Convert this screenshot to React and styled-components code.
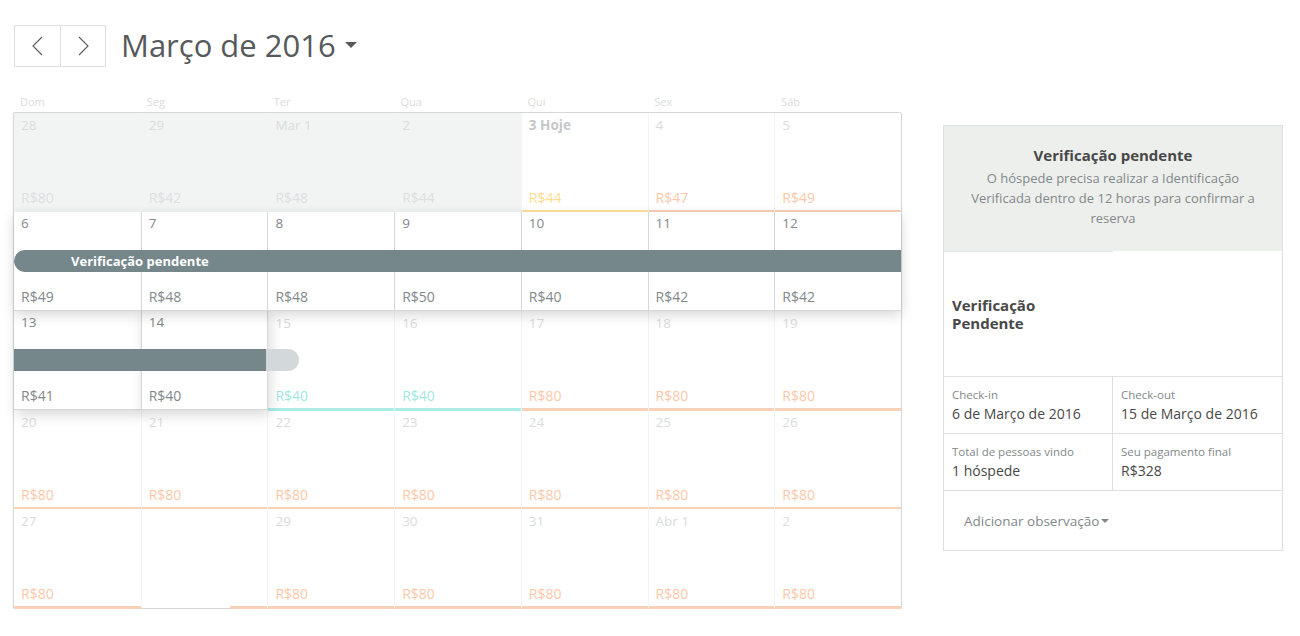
import React from "react";
import styled, { createGlobalStyle, css } from "styled-components";

const GlobalStyle = createGlobalStyle`
  body {
    margin: 0;
    background: #fff;
    font-family: "Open Sans", "Liberation Sans", sans-serif;
    color: #565a5c;
  }
`;

const weekdays = ["Dom", "Seg", "Ter", "Qua", "Qui", "Sex", "Sáb"];

const weeks = [
  {
    days: [
      { d: "28", p: "R$80", t: "past" },
      { d: "29", p: "R$42", t: "past" },
      { d: "Mar 1", p: "R$48", t: "past" },
      { d: "2", p: "R$44", t: "past" },
      { d: "3 Hoje", p: "R$44", t: "today" },
      { d: "4", p: "R$47", t: "open" },
      { d: "5", p: "R$49", t: "open" },
    ],
  },
  {
    raised: true,
    bar: { label: "Verificação pendente", dark: 887, tail: 0, open: true },
    days: [
      { d: "6", p: "R$49", t: "booked" },
      { d: "7", p: "R$48", t: "booked" },
      { d: "8", p: "R$48", t: "booked" },
      { d: "9", p: "R$50", t: "booked" },
      { d: "10", p: "R$40", t: "booked" },
      { d: "11", p: "R$42", t: "booked" },
      { d: "12", p: "R$42", t: "booked" },
    ],
  },
  {
    bar: { label: "", dark: 252, tail: 33 },
    days: [
      { d: "13", p: "R$41", t: "booked", lift: true },
      { d: "14", p: "R$40", t: "booked", lift: true },
      { d: "15", p: "R$40", t: "cyan" },
      { d: "16", p: "R$40", t: "cyan" },
      { d: "17", p: "R$80", t: "open" },
      { d: "18", p: "R$80", t: "open" },
      { d: "19", p: "R$80", t: "open" },
    ],
  },
  {
    days: [
      { d: "20", p: "R$80", t: "open" },
      { d: "21", p: "R$80", t: "open" },
      { d: "22", p: "R$80", t: "open" },
      { d: "23", p: "R$80", t: "open" },
      { d: "24", p: "R$80", t: "open" },
      { d: "25", p: "R$80", t: "open" },
      { d: "26", p: "R$80", t: "open" },
    ],
  },
  {
    days: [
      { d: "27", p: "R$80", t: "open" },
      { d: "", p: "", t: "blank" },
      { d: "29", p: "R$80", t: "open" },
      { d: "30", p: "R$80", t: "open" },
      { d: "31", p: "R$80", t: "open" },
      { d: "Abr 1", p: "R$80", t: "open" },
      { d: "2", p: "R$80", t: "open" },
    ],
  },
];

const palette = {
  past: { date: "#d9dcdd", price: "#dcdfe0", line: null, bg: "#f2f4f4" },
  today: { date: "#c4c7c8", price: "#ffdb8e", line: "#ffe29c", bg: "#fff" },
  open: { date: "#d9dcdd", price: "#fdc8a9", line: "#f9d0b8", bg: "#fff" },
  cyan: { date: "#d9dcdd", price: "#9fe9e2", line: "#aaede6", bg: "#fff" },
  booked: { date: "#82888a", price: "#82888a", line: null, bg: "#fff" },
  blank: { date: "#d9dcdd", price: "#fdc8a9", line: null, bg: "#fff" },
};

const Page = styled.div`
  display: flex;
  align-items: flex-start;
  gap: 41px;
  padding: 25px 0 0 13px;
`;

const Left = styled.div`
  display: flex;
  flex-direction: column;
  width: 889px;
`;

const Header = styled.div`
  display: flex;
  align-items: center;
  height: 42px;
  margin-left: 1px;
`;

const NavBox = styled.div`
  display: flex;
  border: 1px solid #dce0e0;
`;

const NavButton = styled.button`
  width: 45px;
  height: 40px;
  display: flex;
  align-items: center;
  justify-content: center;
  background: #fff;
  border: none;
  padding: 0;
  & + & {
    border-left: 1px solid #dce0e0;
  }
`;

const Title = styled.h1`
  margin: -2px 0 0 15px;
  font-size: 31px;
  font-weight: 400;
  color: #565a5c;
  display: flex;
  align-items: center;
  gap: 9px;
`;

const Caret = styled.span`
  width: 0;
  height: 0;
  border-left: ${(p) => p.$size}px solid transparent;
  border-right: ${(p) => p.$size}px solid transparent;
  border-top: ${(p) => p.$size}px solid ${(p) => p.$color};
  display: inline-block;
`;

const WeekdayRow = styled.div`
  display: grid;
  grid-template-columns: repeat(7, 1fr);
  margin-top: 25px;
  height: 20px;
  padding-left: 1px;
`;

const Weekday = styled.div`
  font-size: 11px;
  line-height: 19px;
  color: #dadddd;
  padding-left: 6px;
`;

const Calendar = styled.div`
  border: 1px solid #d4d8d9;
  border-radius: 2px;
  box-shadow: 0 1px 2px rgba(0, 0, 0, 0.06);
  background: #fff;
`;

const Week = styled.div`
  position: relative;
  display: grid;
  grid-template-columns: repeat(7, 1fr);
  height: 99px;
  ${(p) =>
    p.$raised &&
    css`
      z-index: 3;
      box-shadow: 0 4px 12px rgba(0, 0, 0, 0.16);
    `}
  ${(p) => p.$lifted && css`z-index: 2;`}
`;

const Cell = styled.div`
  position: relative;
  display: flex;
  flex-direction: column;
  justify-content: space-between;
  padding: 2px 0 4px 7px;
  background: ${(p) => palette[p.$t].bg};
  border-left: 1px solid #f3f4f4;
  &:first-child {
    border-left: none;
  }
  ${(p) =>
    p.$t === "booked" &&
    css`
      padding-top: 1px;
      padding-bottom: 3px;
      border-left: 1px solid #d4d8d9;
      border-bottom: 1px solid #d4d8d9;
    `}
  ${(p) =>
    p.$lift &&
    css`
      z-index: 2;
      border-right: 1px solid #d4d8d9;
      margin-right: -1px;
      box-shadow: 2px 5px 12px rgba(0, 0, 0, 0.15);
    `}
`;

const DateLabel = styled.span`
  font-size: 13.5px;
  line-height: 20px;
  color: ${(p) => palette[p.$t].date};
  font-weight: ${(p) => (p.$t === "today" ? 700 : 400)};
`;

const Price = styled.span`
  font-size: 14px;
  line-height: 20px;
  color: ${(p) => palette[p.$t].price};
`;

const Underline = styled.div`
  position: absolute;
  bottom: -1px;
  right: 0;
  height: 3px;
  background: ${(p) => p.$color};
`;

const Bar = styled.div`
  position: absolute;
  top: 38px;
  left: 0;
  height: 22px;
  display: flex;
  background: #d3d8da;
  border-radius: ${(p) => (p.$open ? "11px 0 0 11px" : "0 11px 11px 0")};
  z-index: 4;
  overflow: hidden;
`;

const BarFill = styled.div`
  height: 22px;
  background: #75878a;
  border-radius: ${(p) => (p.$open ? "11px 0 0 11px" : "0")};
  color: #fff;
  font-size: 13px;
  font-weight: 700;
  line-height: 22px;
  padding-left: 57px;
  box-sizing: border-box;
`;

const Panel = styled.aside`
  margin-top: 100px;
  width: 338px;
  border: 1px solid #dce0e0;
  background: #fff;
`;

const PanelHead = styled.div`
  background: #edefed;
  height: 125px;
  box-sizing: border-box;
  padding: 18px 18px 0;
  text-align: center;
`;

const PanelTitle = styled.div`
  font-size: 15px;
  font-weight: 700;
  color: #484848;
  line-height: 22px;
`;

const PanelText = styled.div`
  margin-top: 2px;
  font-size: 13px;
  line-height: 20px;
  color: #82888a;
`;

const HalfRule = styled.div`
  width: 50%;
  height: 1px;
  background: #e4e7e7;
`;

const Status = styled.div`
  height: 124px;
  display: flex;
  align-items: center;
  padding-left: 8px;
  font-size: 15px;
  font-weight: 700;
  line-height: 18px;
  color: #484848;
  border-bottom: 1px solid #dce0e0;
`;

const InfoGrid = styled.div`
  display: grid;
  grid-template-columns: 1fr 1fr;
`;

const InfoCell = styled.div`
  height: 57px;
  box-sizing: border-box;
  padding: 10px 8px 0;
  border-bottom: 1px solid #dce0e0;
  &:nth-child(odd) {
    border-right: 1px solid #dce0e0;
  }
`;

const InfoLabel = styled.div`
  font-size: 11.5px;
  line-height: 16px;
  color: #82888a;
`;

const InfoValue = styled.div`
  font-size: 14px;
  line-height: 20px;
  color: #484848;
  margin-top: 1px;
`;

const NoteRow = styled.div`
  height: 59px;
  display: flex;
  align-items: center;
  padding-left: 20px;
  font-size: 13.5px;
  color: #82888a;
  gap: 2px;
`;

const Chevron = ({ dir }) => (
  <svg width="14" height="20" viewBox="0 0 14 20">
    <polyline
      points={dir === "left" ? "11,1 2,10 11,19" : "3,1 12,10 3,19"}
      fill="none"
      stroke="#565a5c"
      strokeWidth="1.1"
    />
  </svg>
);

const lineFor = (day) => {
  if (day.t === "blank") return { color: "#f9d0b8", left: 88 };
  const c = palette[day.t].line;
  return c ? { color: c, left: 0 } : null;
};

const App = () => (
  <>
    <GlobalStyle />
    <Page>
      <Left>
        <Header>
          <NavBox>
            <NavButton>
              <Chevron dir="left" />
            </NavButton>
            <NavButton>
              <Chevron dir="right" />
            </NavButton>
          </NavBox>
          <Title>
            Março de 2016
            <Caret $size={6} $color="#565a5c" />
          </Title>
        </Header>
        <WeekdayRow>
          {weekdays.map((w) => (
            <Weekday key={w}>{w}</Weekday>
          ))}
        </WeekdayRow>
        <Calendar>
          {weeks.map((week, wi) => (
            <Week
              key={wi}
              $raised={week.raised}
              $lifted={week.days.some((d) => d.lift)}
            >
              {week.days.map((day, di) => {
                const line = lineFor(day);
                return (
                  <Cell key={di} $t={day.t} $lift={day.lift}>
                    <DateLabel $t={day.t}>{day.d}</DateLabel>
                    <Price $t={day.t}>{day.p}</Price>
                    {line && (
                      <Underline
                        $color={line.color}
                        style={{ left: line.left }}
                      />
                    )}
                  </Cell>
                );
              })}
              {week.bar && (
                <Bar
                  $open={week.bar.open}
                  style={{ width: week.bar.dark + week.bar.tail }}
                >
                  <BarFill $open={week.bar.open} style={{ width: week.bar.dark }}>
                    {week.bar.label}
                  </BarFill>
                </Bar>
              )}
            </Week>
          ))}
        </Calendar>
      </Left>
      <Panel>
        <PanelHead>
          <PanelTitle>Verificação pendente</PanelTitle>
          <PanelText>
            O hóspede precisa realizar a Identificação Verificada dentro de 12
            horas para confirmar a reserva
          </PanelText>
        </PanelHead>
        <HalfRule />
        <Status>
          Verificação
          <br />
          Pendente
        </Status>
        <InfoGrid>
          <InfoCell>
            <InfoLabel>Check-in</InfoLabel>
            <InfoValue>6 de Março de 2016</InfoValue>
          </InfoCell>
          <InfoCell>
            <InfoLabel>Check-out</InfoLabel>
            <InfoValue>15 de Março de 2016</InfoValue>
          </InfoCell>
          <InfoCell>
            <InfoLabel>Total de pessoas vindo</InfoLabel>
            <InfoValue>1 hóspede</InfoValue>
          </InfoCell>
          <InfoCell>
            <InfoLabel>Seu pagamento final</InfoLabel>
            <InfoValue>R$328</InfoValue>
          </InfoCell>
        </InfoGrid>
        <NoteRow>
          Adicionar observação
          <Caret $size={4} $color="#82888a" />
        </NoteRow>
      </Panel>
    </Page>
  </>
);

export default App;
